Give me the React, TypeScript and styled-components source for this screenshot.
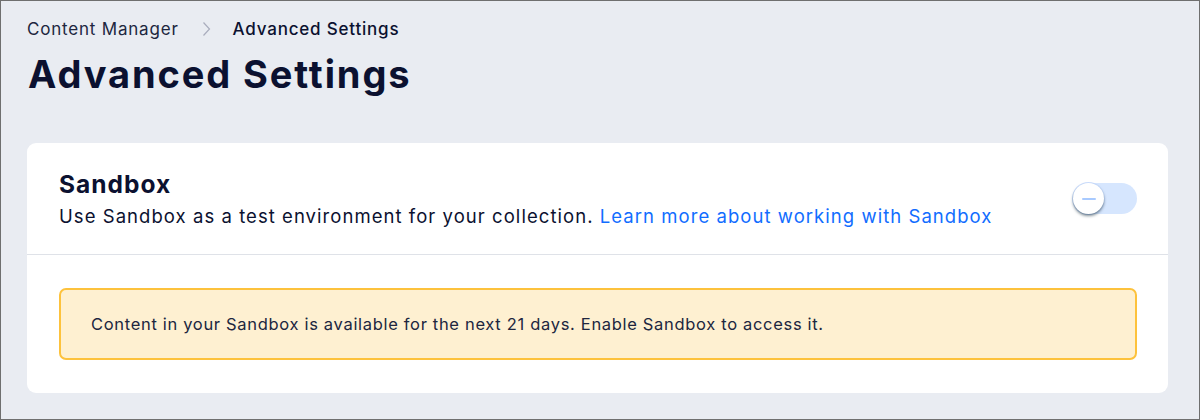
import React from 'react';
import styled, { createGlobalStyle } from 'styled-components';

const GlobalStyle = createGlobalStyle`
  html, body {
    margin: 0;
    padding: 0;
    background: #e9ecf1;
  }
  * {
    box-sizing: border-box;
  }
`;

const Frame = styled.div`
  width: 1200px;
  height: 420px;
  border: 1px solid #6f6f6f;
  background: #e9ecf2;
  padding: 17px 31px 0 26px;
  font-family: Inter, 'Noto Sans', sans-serif;
  color: #0b1130;
  overflow: hidden;
`;

const Breadcrumbs = styled.nav`
  display: flex;
  align-items: center;
  height: 22px;
  font-size: 17px;
  letter-spacing: 0.8px;
`;

const Crumb = styled.span<{ $current?: boolean }>`
  color: ${(p) => (p.$current ? '#0b1130' : '#20263f')};
  font-weight: ${(p) => (p.$current ? 500 : 400)};
`;

const Chevron = styled.span`
  display: flex;
  margin: 0 22px 0 23px;
`;

const Title = styled.h1`
  margin: 12px 0 0 1px;
  font-size: 38px;
  line-height: 44px;
  font-weight: 700;
  letter-spacing: 1.9px;
`;

const Card = styled.section`
  margin-top: 47px;
  background: #fff;
  border-radius: 9px;
  height: 250px;
  overflow: hidden;
`;

const CardHeader = styled.div`
  display: flex;
  align-items: center;
  justify-content: space-between;
  padding: 25px 31px 25px 32px;
  border-bottom: 1px solid #dfe2e8;
`;

const HeaderText = styled.div`
  display: flex;
  flex-direction: column;
`;

const CardTitle = styled.h2`
  margin: 0;
  font-size: 24.5px;
  line-height: 32px;
  font-weight: 700;
  letter-spacing: 1px;
`;

const Description = styled.p`
  margin: 3px 0 0;
  font-size: 18.5px;
  line-height: 26px;
  letter-spacing: 1.05px;
  color: #0b1130;
`;

const Link = styled.a`
  color: #116dff;
  text-decoration: none;
`;

const Track = styled.button<{ $on?: boolean }>`
  position: relative;
  flex-shrink: 0;
  width: 64px;
  height: 31px;
  border: none;
  border-radius: 16px;
  background: ${(p) => (p.$on ? '#116dff' : '#d6e6fe')};
  padding: 0;
  cursor: pointer;
`;

const Knob = styled.span`
  position: absolute;
  left: 0;
  top: 0;
  width: 31px;
  height: 31px;
  border-radius: 50%;
  background: #fff;
  box-shadow: 0 2px 3px rgba(22, 45, 61, 0.55), 0 0 0 1px rgba(200, 220, 254, 0.9);
  display: flex;
  align-items: center;
  justify-content: center;
`;

const Dash = styled.span`
  width: 14px;
  height: 2px;
  border-radius: 1px;
  background: #a8caff;
`;

const CardBody = styled.div`
  padding: 33px 31px 0 32px;
`;

const Notice = styled.div`
  display: flex;
  align-items: center;
  height: 72px;
  padding: 0 30px;
  background: #fef0d1;
  border: 2px solid #fdc23c;
  border-radius: 7px;
  font-size: 16.5px;
  letter-spacing: 0.68px;
  color: #20263f;
`;

const App = () => {
  return (
    <>
      <GlobalStyle />
      <Frame>
        <Breadcrumbs>
          <Crumb>Content Manager</Crumb>
          <Chevron>
            <svg width="9" height="16" viewBox="0 0 9 16" fill="none">
              <path d="M1.5 1.5 L7.5 8 L1.5 14.5" stroke="#a9adbd" strokeWidth="1.2" />
            </svg>
          </Chevron>
          <Crumb $current>Advanced Settings</Crumb>
        </Breadcrumbs>
        <Title>Advanced Settings</Title>
        <Card>
          <CardHeader>
            <HeaderText>
              <CardTitle>Sandbox</CardTitle>
              <Description>
                Use Sandbox as a test environment for your collection.{' '}
                <Link href="#">Learn more about working with Sandbox</Link>
              </Description>
            </HeaderText>
            <Track aria-label="Enable Sandbox">
              <Knob>
                <Dash />
              </Knob>
            </Track>
          </CardHeader>
          <CardBody>
            <Notice>
              Content in your Sandbox is available for the next 21 days. Enable Sandbox to access it.
            </Notice>
          </CardBody>
        </Card>
      </Frame>
    </>
  );
};

export default App;
